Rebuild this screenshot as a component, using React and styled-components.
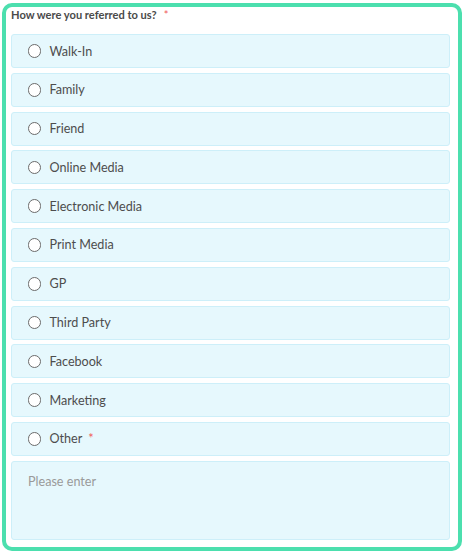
import React, { useState } from "react";
import styled, { createGlobalStyle } from "styled-components";

const options = [
  "Walk-In",
  "Family",
  "Friend",
  "Online Media",
  "Electronic Media",
  "Print Media",
  "GP",
  "Third Party",
  "Facebook",
  "Marketing",
  "Other",
];

const GlobalStyle = createGlobalStyle`
  body {
    margin: 0;
    background: #ffffff;
    font-family: Lato, "Noto Sans", sans-serif;
  }
`;

const Card = styled.div`
  box-sizing: border-box;
  width: 460px;
  height: 548px;
  margin: 3px 0 0 2px;
  border: 4px solid #4cdfae;
  border-radius: 10px;
  padding: 0 8px 8px 5px;
  background: #fff;
`;

const Title = styled.div`
  font-size: 11.1px;
  font-weight: 700;
  line-height: 16px;
  color: #4a4a4a;
  margin-bottom: 11px;
`;

const Star = styled.span`
  color: #f05a5a;
  font-weight: 400;
  margin-left: ${(p) => p.$gap || 6}px;
`;

const List = styled.div`
  display: flex;
  flex-direction: column;
  gap: 4.8px;
`;

const Row = styled.label`
  box-sizing: border-box;
  height: 34px;
  display: flex;
  align-items: center;
  padding-left: 15.5px;
  background: #e6f8fd;
  border: 1px solid #cdeff9;
  border-radius: 3px;
  cursor: pointer;
`;

const Radio = styled.span`
  box-sizing: border-box;
  width: 13.5px;
  height: 13.5px;
  border-radius: 50%;
  border: 1px solid ${(p) => (p.$on ? "#4cdfae" : "#6b6b6b")};
  background: #fff;
  display: flex;
  align-items: center;
  justify-content: center;
  margin-right: 8.5px;
  &::after {
    content: "";
    width: 7px;
    height: 7px;
    border-radius: 50%;
    background: ${(p) => (p.$on ? "#4cdfae" : "transparent")};
  }
`;

const Text = styled.span`
  font-size: 12.6px;
  color: #4d4d4d;
`;

const Area = styled.textarea`
  box-sizing: border-box;
  height: 79px;
  width: 100%;
  resize: none;
  background: #e6f8fd;
  border: 1px solid #cdeff9;
  border-radius: 3px;
  padding: 12px 16px;
  font-family: Lato, "Noto Sans", sans-serif;
  font-size: 12.6px;
  color: #4d4d4d;
  outline: none;
  &::placeholder {
    color: #9a9a9a;
  }
`;

export default function App() {
  const [value, setValue] = useState(null);

  return (
    <>
      <GlobalStyle />
      <Card>
        <Title>
          How were you referred to us?
          <Star $gap={7}>*</Star>
        </Title>
        <List>
          {options.map((o) => (
            <Row key={o} onClick={() => setValue(o)}>
              <Radio $on={value === o} />
              <Text>
                {o}
                {o === "Other" && <Star>*</Star>}
              </Text>
            </Row>
          ))}
          <Area placeholder="Please enter" />
        </List>
      </Card>
    </>
  );
}
